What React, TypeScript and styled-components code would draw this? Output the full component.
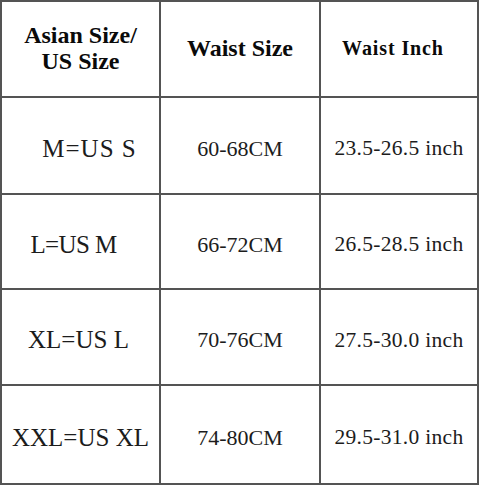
import styled, { createGlobalStyle } from "styled-components";

const GlobalStyle = createGlobalStyle`
  html, body {
    margin: 0;
    padding: 0;
    background: #ffffff;
  }
  body {
    width: 481px;
    height: 488px;
    overflow: hidden;
  }
`;

const Page = styled.div`
  width: 481px;
  height: 488px;
  background: #ffffff;
  padding: 0 2px 3px 0;
  box-sizing: border-box;
`;

const Chart = styled.div`
  display: grid;
  grid-template-columns: 157px 158px 156px;
  grid-template-rows: 94px 95px 93px 94px 97px;
  gap: 2px;
  padding: 2px;
  background: #545454;
  width: fit-content;
  font-family: "Liberation Serif", "Times New Roman", serif;
`;

// $offset moves the centred text sideways by that many pixels
const Cell = styled.div<{ $size?: number; $spacing?: number; $offset?: number }>`
  background: #ffffff;
  display: flex;
  align-items: center;
  justify-content: center;
  text-align: center;
  color: #1c1c1c;
  font-size: ${(p) => p.$size ?? 21}px;
  letter-spacing: ${(p) => p.$spacing ?? 0}px;
  padding-left: ${(p) => Math.max(0, (p.$offset ?? 0) * 2)}px;
  padding-right: ${(p) => Math.max(0, -(p.$offset ?? 0) * 2)}px;
  padding-top: 6px;
  white-space: nowrap;
`;

const HeadCell = styled(Cell)`
  color: #0a0a0a;
  font-weight: bold;
  line-height: 26px;
  padding-top: 0;
  padding-bottom: 2px;
`;

const rows = [
  { size: "M=US S", spacing: 1, offset: 9, cm: "60-68CM", inch: "23.5-26.5 inch" },
  { size: "L=US M", spacing: -0.6, offset: -7, cm: "66-72CM", inch: "26.5-28.5 inch" },
  { size: "XL=US L", spacing: 0, offset: -2, cm: "70-76CM", inch: "27.5-30.0 inch" },
  { size: "XXL=US XL", spacing: 0, offset: 0, cm: "74-80CM", inch: "29.5-31.0 inch" },
];

export default function App() {
  return (
    <Page>
      <GlobalStyle />
      <Chart>
        <HeadCell $size={24}>
          Asian Size/
          <br />
          US Size
        </HeadCell>
        <HeadCell $size={24}>Waist Size</HeadCell>
        <HeadCell $size={20} $spacing={0.9} $offset={-6}>
          Waist Inch
        </HeadCell>
        {rows.map((r) => (
          <>
            <Cell key={r.size} $size={25} $spacing={r.spacing} $offset={r.offset}>
              {r.size}
            </Cell>
            <Cell key={r.cm} $size={22}>
              {r.cm}
            </Cell>
            <Cell key={r.inch} $size={21.5} $spacing={0.3}>
              {r.inch}
            </Cell>
          </>
        ))}
      </Chart>
    </Page>
  );
}
